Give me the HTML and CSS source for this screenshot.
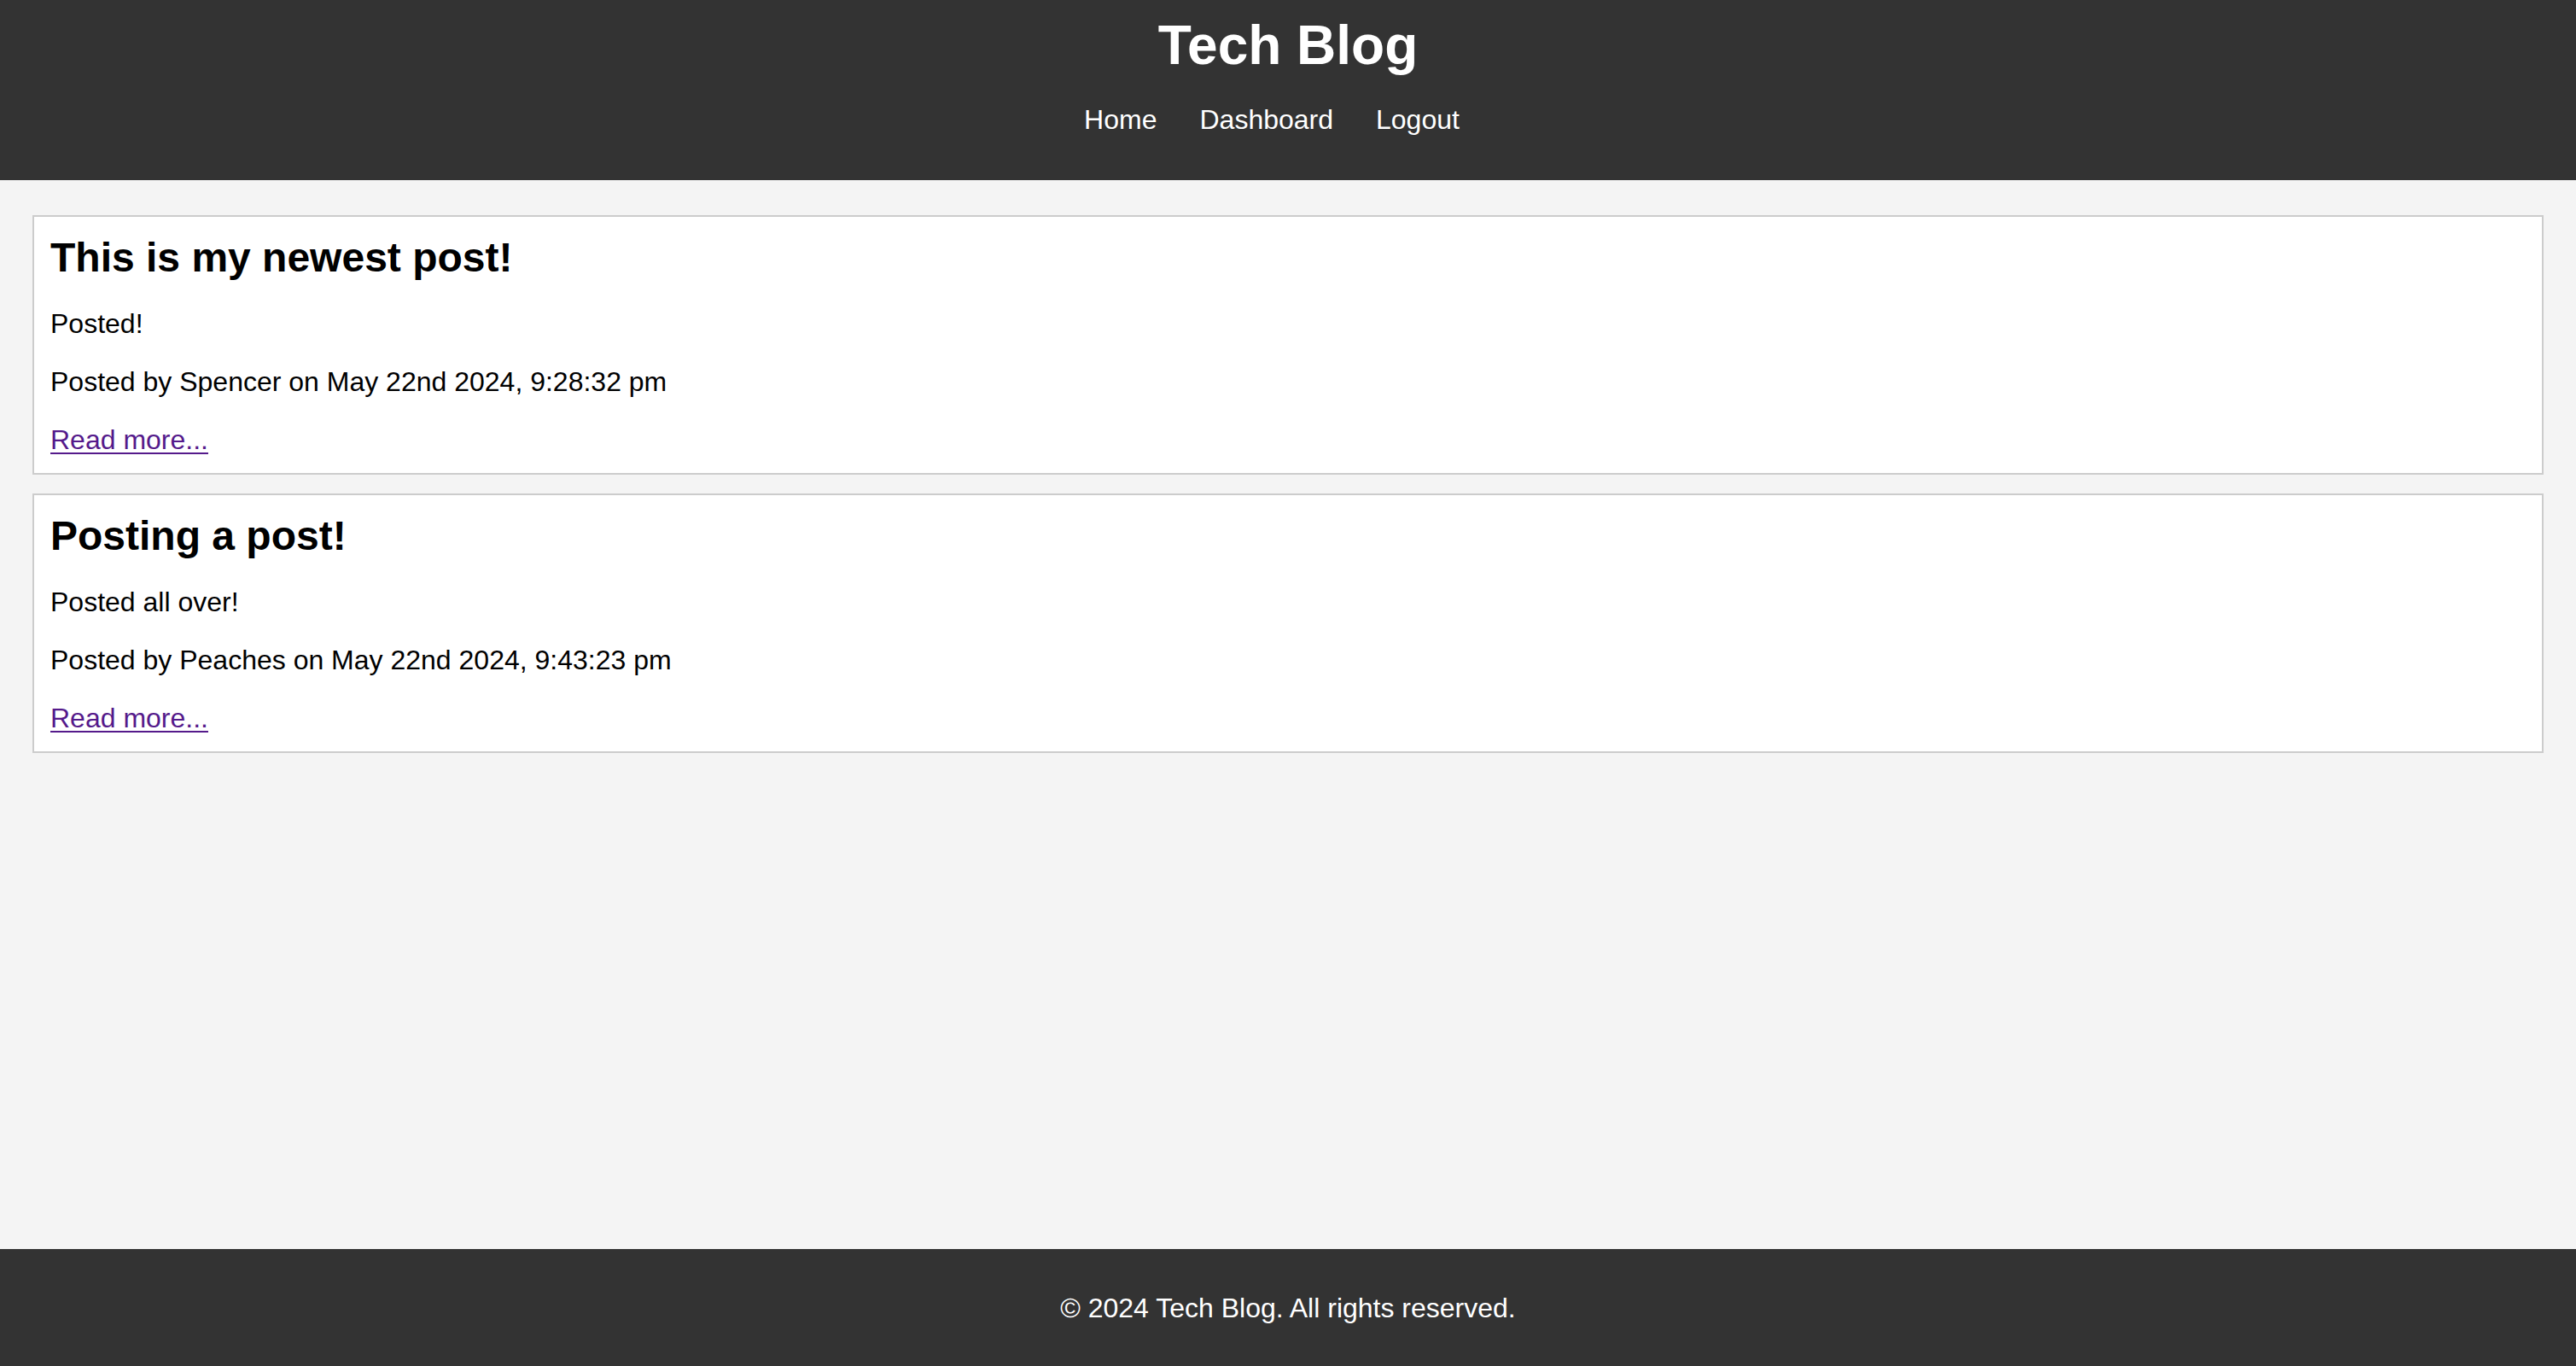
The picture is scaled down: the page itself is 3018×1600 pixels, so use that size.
FILE: index.html
```html
<!DOCTYPE html>
<html lang="en">
<head>
<meta charset="utf-8">
<title>Tech Blog</title>
<link rel="stylesheet" href="styles.css">
</head>
<body>
<header class="site-header">
  <h1 class="site-title">Tech Blog</h1>
  <nav class="site-nav">
    <a href="#" class="nav-link">Home</a>
    <a href="#" class="nav-link">Dashboard</a>
    <a href="#" class="nav-link">Logout</a>
  </nav>
</header>
<main class="content">
  <article class="post">
    <h2 class="post-title">This is my newest post!</h2>
    <p class="post-text">Posted!</p>
    <p class="post-text">Posted by Spencer on May 22nd 2024, 9:28:32 pm</p>
    <a href="#" class="post-link">Read more...</a>
  </article>
  <article class="post">
    <h2 class="post-title">Posting a post!</h2>
    <p class="post-text">Posted all over!</p>
    <p class="post-text">Posted by Peaches on May 22nd 2024, 9:43:23 pm</p>
    <a href="#" class="post-link">Read more...</a>
  </article>
</main>
<footer class="site-footer">
  <p class="footer-text">© 2024 Tech Blog. All rights reserved.</p>
</footer>
</body>
</html>
```
FILE: styles.css
```css
* { box-sizing: border-box; }
html, body { margin: 0; padding: 0; }
body {
  font-family: "Liberation Sans", Arial, Helvetica, sans-serif;
  background: #f4f4f4;
  color: #000;
  height: 100vh;
  display: flex;
  flex-direction: column;
  overflow: hidden;
}
.site-header {
  background: #333;
  color: #fff;
  height: 211px;
  flex: none;
  padding-top: 16px;
  display: flex;
  flex-direction: column;
  align-items: center;
}
.site-title {
  margin: 0;
  font-size: 64px;
  line-height: 75px;
  font-weight: bold;
}
.site-nav {
  margin-top: 31px;
  padding-left: 12px;
  display: flex;
  justify-content: center;
  font-size: 32px;
  line-height: 36px;
}
.nav-link {
  color: #fff;
  text-decoration: none;
  margin-right: 50px;
}
.content {
  flex: 1;
  padding: 41px 38px 0;
  display: flex;
  flex-direction: column;
  gap: 22px;
}
.post {
  background: #fff;
  border: 2px solid #ccc;
  padding: 20px 19px 21px;
  display: flex;
  flex-direction: column;
  align-items: flex-start;
  gap: 32px;
}
.post-title {
  margin: 1px 0 0;
  font-size: 48px;
  line-height: 54px;
  font-weight: bold;
}
.post-text {
  margin: 0;
  font-size: 32px;
  line-height: 36px;
}
.post-link {
  font-size: 32px;
  line-height: 36px;
  color: #551a8b;
  text-decoration: underline;
  text-decoration-thickness: 2px;
  text-underline-offset: 4px;
}
.site-footer {
  background: #333;
  color: #fff;
  height: 137px;
  flex: none;
  padding-top: 51px;
  text-align: center;
}
.footer-text {
  margin: 0;
  font-size: 32px;
  line-height: 36px;
}
```
